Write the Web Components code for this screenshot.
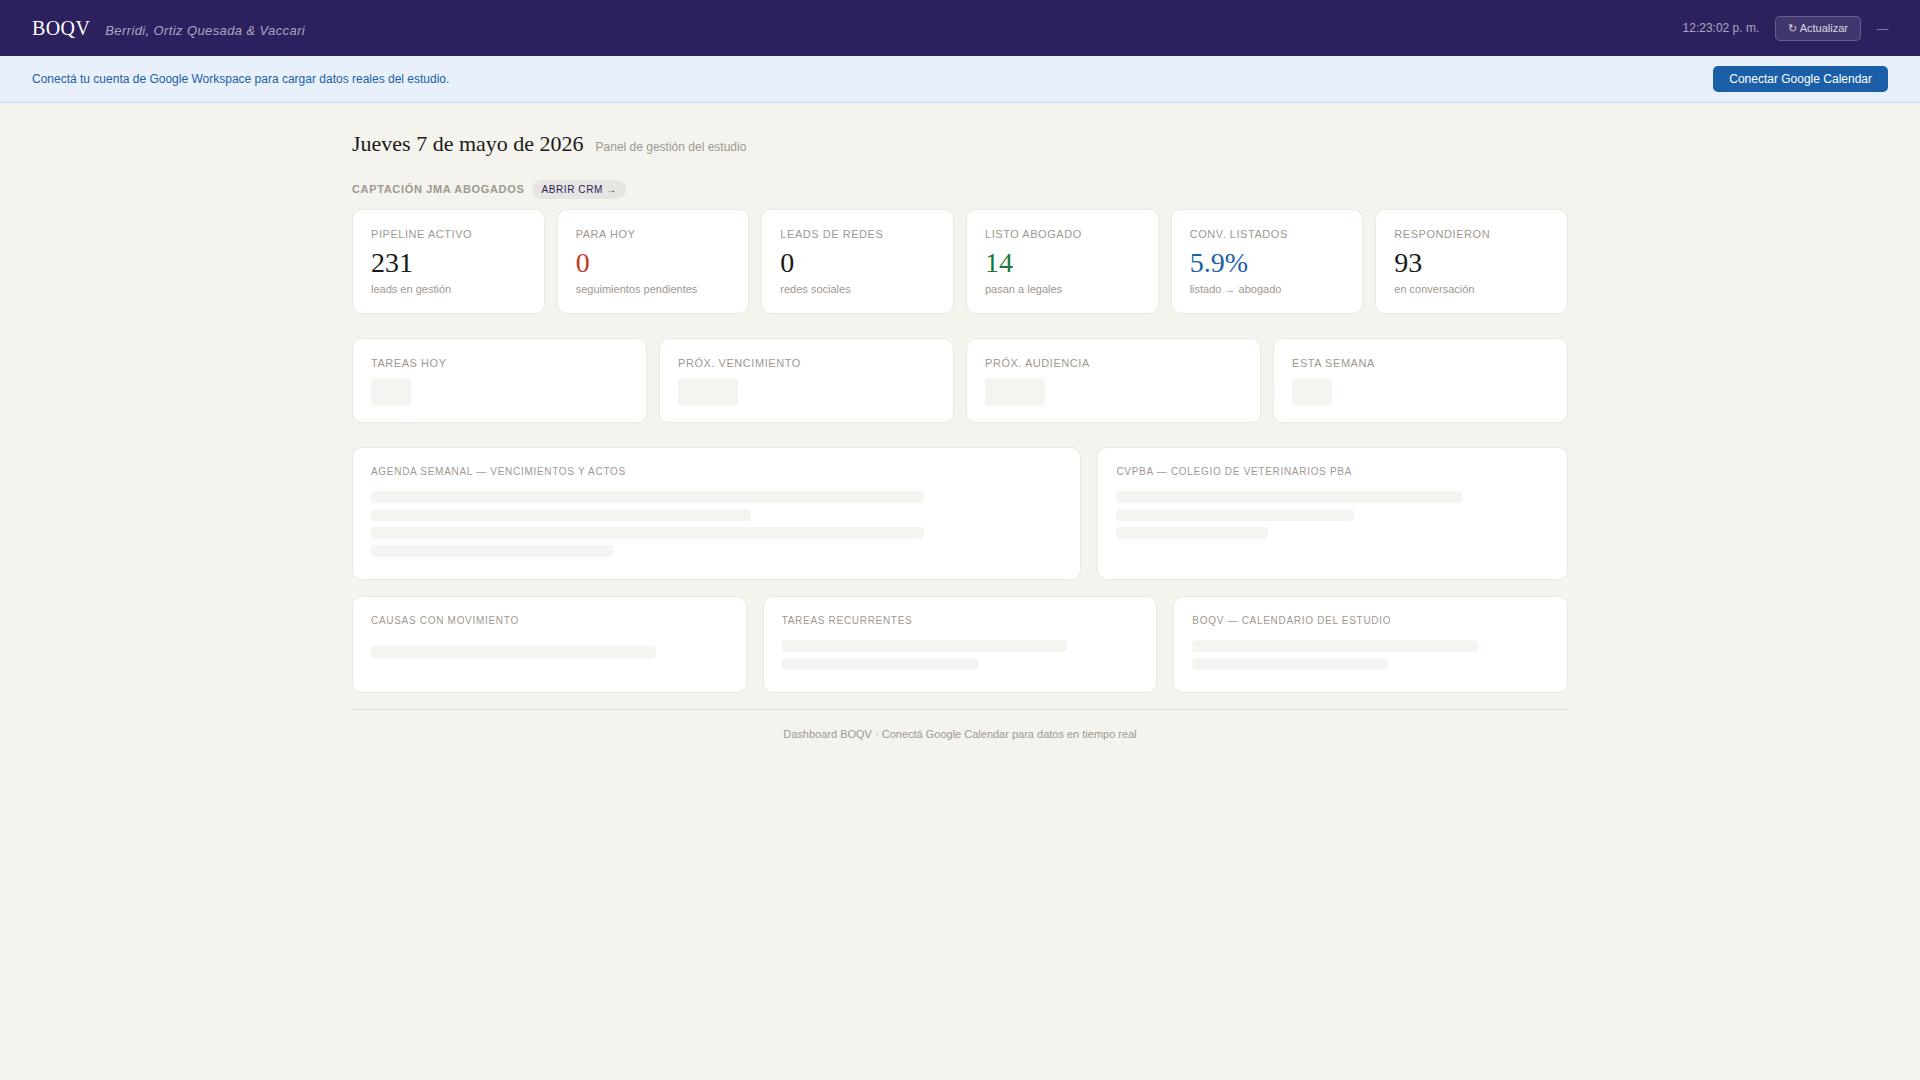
<!DOCTYPE html>
<html lang="es">
<head>
<meta charset="utf-8">
<title>BOQV</title>
<style>
    html, body {
        margin: 0;
        min-height: 100%;
        background: #f4f3ee;
        color: #1c1a18;
        font-family: "Liberation Sans", Arial, sans-serif;
    }
</style>
</head>
<body>
<boqv-header></boqv-header>
<boqv-banner></boqv-banner>
<boqv-main>
    <boqv-title slot="title" date="Jueves 7 de mayo de 2026" note="Panel de gestión del estudio"></boqv-title>

    <boqv-section>
        <boqv-kpi label="Pipeline activo" value="231" sub="leads en gestión"></boqv-kpi>
        <boqv-kpi label="Para hoy" value="0" sub="seguimientos pendientes" tone="red"></boqv-kpi>
        <boqv-kpi label="Leads de redes" value="0" sub="redes sociales"></boqv-kpi>
        <boqv-kpi label="Listo abogado" value="14" sub="pasan a legales" tone="green"></boqv-kpi>
        <boqv-kpi label="Conv. listados" value="5.9%" sub="listado → abogado" tone="blue"></boqv-kpi>
        <boqv-kpi label="Respondieron" value="93" sub="en conversación"></boqv-kpi>
    </boqv-section>

    <boqv-grid columns="repeat(4, 1fr)" gap="12px" after="24px">
        <boqv-stat label="Tareas hoy" size="40"></boqv-stat>
        <boqv-stat label="Próx. vencimiento" size="60"></boqv-stat>
        <boqv-stat label="Próx. audiencia" size="60"></boqv-stat>
        <boqv-stat label="Esta semana" size="40"></boqv-stat>
    </boqv-grid>

    <boqv-grid columns="1.55fr 1fr" gap="16px" after="16px">
        <boqv-panel title="Agenda semanal — vencimientos y actos" lines="80 55 80 35"></boqv-panel>
        <boqv-panel title="CVPBA — Colegio de Veterinarios PBA" lines="80 55 35"></boqv-panel>
    </boqv-grid>

    <boqv-grid columns="repeat(3, 1fr)" gap="16px" after="16px">
        <boqv-panel title="Causas con movimiento" lines="80" inset></boqv-panel>
        <boqv-panel title="Tareas recurrentes" lines="80 55"></boqv-panel>
        <boqv-panel title="BOQV — Calendario del estudio" lines="80 55"></boqv-panel>
    </boqv-grid>

    <boqv-footer>Dashboard BOQV · Conectá Google Calendar para datos en tiempo real</boqv-footer>
</boqv-main>

<script>
const cardCss = `
    background: #fff;
    border: 1px solid #eae8e3;
    border-radius: 10px;
    box-sizing: border-box;
    padding: 18px 18px 16px;
`;

function define(name, css, markup)
{
    customElements.define(name, class extends HTMLElement
    {
        constructor()
        {
            super();
            this.attachShadow({mode: 'open'});
        }

        connectedCallback()
        {
            const attr = key => this.getAttribute(key) ?? "";
            this.shadowRoot.innerHTML = `<style>${css}</style>${markup(attr, this)}`;
        }
    });
}

define("boqv-header", `
    :host {
        display: flex;
        align-items: center;
        justify-content: space-between;
        height: 56px;
        padding: 0 32px;
        box-sizing: border-box;
        background: #2d205e;
    }
    .brand { display: flex; align-items: baseline; gap: 15px; }
    .logo { font: 20px "Liberation Serif", "Times New Roman", serif; color: #fff; letter-spacing: 0.02em; }
    .firm { font: italic 13px "Liberation Sans", Arial, sans-serif; color: rgba(255,255,255,.6); letter-spacing: 0.03em; }
    .tools { display: flex; align-items: center; gap: 16px; font-size: 12px; }
    .clock { color: rgba(255,255,255,.6); }
    button {
        height: 25px;
        padding: 0 12px;
        font: 11px "Liberation Sans", Arial, sans-serif;
        color: rgba(255,255,255,.8);
        background: rgba(255,255,255,.1);
        border: 1px solid rgba(255,255,255,.2);
        border-radius: 5px;
    }
    .user { color: rgba(255,255,255,.5); font-size: 11px; }
`, () => `
    <div class="brand"><span class="logo">BOQV</span><span class="firm">Berridi, Ortiz Quesada &amp; Vaccari</span></div>
    <div class="tools"><span class="clock">12:23:02 p. m.</span><button>↻ Actualizar</button><span class="user">—</span></div>
`);

define("boqv-banner", `
    :host {
        display: flex;
        align-items: center;
        justify-content: space-between;
        padding: 10px 32px;
        background: #e8f0fb;
        border-bottom: 1px solid #c8daf5;
        font-size: 12px;
        color: #1a5fa8;
    }
    button {
        height: 26px;
        padding: 0 16px;
        font: 12px "Liberation Sans", Arial, sans-serif;
        color: #fff;
        background: #1a5fa8;
        border: 0;
        border-radius: 5px;
    }
`, () => `
    <span>Conectá tu cuenta de Google Workspace para cargar datos reales del estudio.</span>
    <button>Conectar Google Calendar</button>
`);

define("boqv-main", `
    :host {
        display: block;
        box-sizing: border-box;
        max-width: 1280px;
        margin: 0 auto;
        padding: 28px 32px;
    }
`, () => `<slot name="title"></slot><slot></slot>`);

define("boqv-title", `
    :host { display: flex; align-items: baseline; gap: 12px; margin-bottom: 24px; }
    h1 { margin: 0; font: 400 22px/25px "Liberation Serif", "Times New Roman", serif; color: #1c1a18; }
    span { font-size: 12px; color: #a09890; }
`, attr => `<h1>${attr("date")}</h1><span>${attr("note")}</span>`);

define("boqv-section", `
    :host { display: block; margin-bottom: 24px; }
    .head { display: flex; align-items: center; gap: 8px; margin-bottom: 10px; }
    .name { font-size: 11px; line-height: 12px; margin-bottom: 1px; font-weight: 700; letter-spacing: 0.06em; text-transform: uppercase; color: #a09890; }
    .crm {
        padding: 2px 9px;
        font-size: 10px;
        line-height: 15px;
        letter-spacing: 0.06em;
        color: #2d205e;
        background: #e6e5e2;
        border-radius: 12px;
    }
    .row { display: grid; grid-template-columns: repeat(6, 1fr); gap: 12px; }
`, () => `
    <div class="head"><span class="name">Captación JMA Abogados</span><span class="crm">ABRIR CRM →</span></div>
    <div class="row"><slot></slot></div>
`);

define("boqv-grid", `
    :host { display: grid; }
`, (attr, host) => {
    host.style.gridTemplateColumns = attr("columns");
    host.style.gap = attr("gap");
    host.style.marginBottom = attr("after");
    return `<slot></slot>`;
});

const tones = {red: "#c0392b", green: "#1a7a3c", blue: "#1a5fa8"};

define("boqv-kpi", `
    :host { display: block; ${cardCss} padding-bottom: 17px; }
    .label { font-size: 11px; letter-spacing: 0.05em; text-transform: uppercase; color: #a09890; line-height: 13px; }
    .value { font: 28px/32px "Liberation Serif", "Times New Roman", serif; color: #1c1a18; margin: 6px 0 4px; }
    .sub { font-size: 11px; line-height: 13px; color: #a09890; }
`, attr => `
    <div class="label">${attr("label")}</div>
    <div class="value" style="color:${tones[attr("tone")] ?? "#1c1a18"}">${attr("value")}</div>
    <div class="sub">${attr("sub")}</div>
`);

define("boqv-stat", `
    :host { display: block; ${cardCss} }
    .label { font-size: 11px; letter-spacing: 0.05em; text-transform: uppercase; color: #a09890; line-height: 13px; }
    .skeleton { height: 28px; margin-top: 8px; background: #f5f4f0; border-radius: 4px; }
`, attr => `
    <div class="label">${attr("label")}</div>
    <div class="skeleton" style="width:${attr("size")}px"></div>
`);

define("boqv-panel", `
    :host { display: block; ${cardCss} }
    .title { font-size: 10px; letter-spacing: 0.07em; text-transform: uppercase; color: #a09890; line-height: 11px; margin-bottom: 14px; }
    .lines.inset { padding-top: 6px; }
    .line { height: 12px; margin-bottom: 6px; background: #f5f4f0; border-radius: 4px; }
`, (attr, host) => `
    <div class="title">${attr("title")}</div>
    <div class="lines ${host.hasAttribute("inset") ? "inset" : ""}">
        ${attr("lines").split(" ").map(w => `<div class="line" style="width:${w}%"></div>`).join("")}
    </div>
`);

define("boqv-footer", `
    :host {
        display: block;
        padding-top: 18px;
        border-top: 1px solid #e0ddd6;
        font-size: 11px;
        line-height: 13px;
        text-align: center;
        color: #a09890;
    }
`, () => `<slot></slot>`);
</script>
</body>
</html>
